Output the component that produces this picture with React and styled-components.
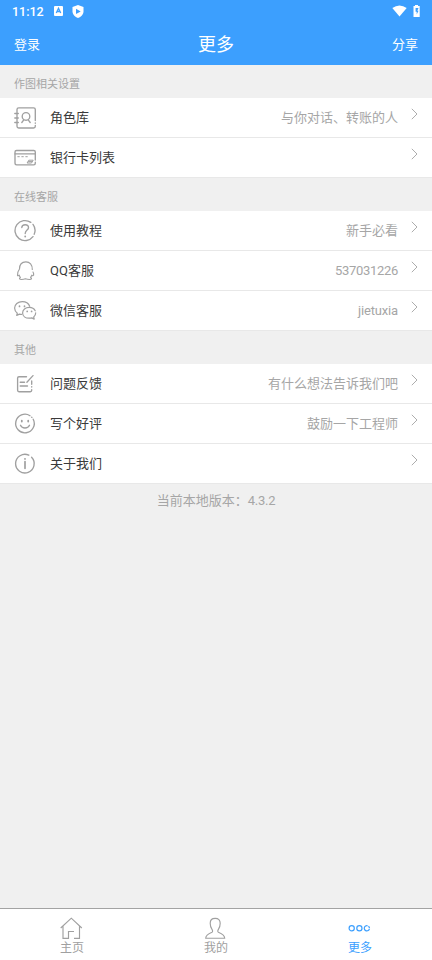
import React from "react";
import styled, { createGlobalStyle } from "styled-components";

const colors = {
	primary: "#3c9ffe",
	page: "#f0f0f0",
	line: "#e8e8e8",
	text: "#3a3a3a",
	muted: "#a6a6a6",
	icon: "#a0a0a0",
};

const GlobalStyle = createGlobalStyle`
	* {
		box-sizing: border-box;
	}

	body {
		margin: 0;
		font-family: Roboto, "Noto Sans CJK SC", sans-serif;
		background: ${colors.page};
	}
`;

const Screen = styled.div`
	height: 960px;
	width: 432px;
	display: flex;
	flex-direction: column;
	background: ${colors.page};
	overflow: hidden;
`;

const StatusBar = styled.div`
	height: 23px;
	flex: none;
	display: flex;
	align-items: center;
	padding: 0 12px;
	color: #fff;
	background: ${colors.primary};
	font-size: 12.5px;
	font-weight: 500;

	svg {
		display: block;
	}
`;

const StatusIcons = styled.div`
	display: flex;
	align-items: center;
	gap: ${(props) => props.$gap}px;
	margin-left: ${(props) => props.$left};
	padding-bottom: 1px;
`;

const NavBar = styled.header`
	height: 42px;
	flex: none;
	display: grid;
	grid-template-columns: 1fr auto 1fr;
	align-items: center;
	padding: 0 14px;
	color: #fff;
	background: ${colors.primary};
`;

const NavTitle = styled.h1`
	margin: 0;
	padding-top: 2px;
	font-size: 18px;
	line-height: 26px;
	font-weight: 400;
`;

const NavAction = styled.span`
	font-size: 13px;
	line-height: 20px;
	padding-top: 2px;
	text-align: ${(props) => props.$align};
`;

const Content = styled.main`
	flex: 1;
`;

const SectionTitle = styled.h2`
	height: 33px;
	margin: 0;
	padding: 5px 14px 0;
	font-size: 11px;
	line-height: 30px;
	font-weight: 400;
	color: ${colors.muted};
`;

const List = styled.div`
	background: #fff;
`;

const Row = styled.div`
	height: 40px;
	display: flex;
	align-items: center;
	padding: 0 14px 0 13px;
	border-bottom: 1px solid ${colors.line};
`;

const RowIcon = styled.svg`
	width: 24px;
	height: 24px;
	flex: none;
	margin-right: 13px;
	fill: none;
	stroke: ${colors.icon};
	stroke-width: 1.35;
	stroke-linecap: round;
	stroke-linejoin: round;
`;

const RowLabel = styled.span`
	flex: 1;
	font-size: 13px;
	line-height: 20px;
	color: ${colors.text};
`;

const RowValue = styled.span`
	font-size: 13px;
	line-height: 20px;
	letter-spacing: ${(props) => props.$tracking || 0}px;
	color: ${colors.muted};
`;

const Chevron = styled.svg`
	width: 7px;
	height: 12px;
	margin: 0 0 8px 13px;
	fill: none;
	stroke: #adadad;
	stroke-width: 1;
`;

const Version = styled.p`
	margin: 7px 0 0;
	font-size: 13px;
	line-height: 20px;
	text-align: center;
	color: ${colors.muted};

	span {
		letter-spacing: -0.3px;
	}
`;

const TabBar = styled.nav`
	height: 52px;
	flex: none;
	display: grid;
	grid-template-columns: repeat(3, 1fr);
	background: #fff;
	border-top: 1px solid #a3a3a3;
`;

const Tab = styled.div`
	display: flex;
	flex-direction: column;
	align-items: center;
	padding-top: 7px;
	font-size: 12px;
	line-height: 16px;
	color: ${(props) => (props.$active ? colors.primary : colors.icon)};

	svg {
		width: 24px;
		height: 24px;
		margin-right: 2px;
		fill: none;
		stroke: currentColor;
		stroke-width: 1.15;
	}
`;

const icons = {
	contacts: (
		<>
			<path d="M22.3 14.5V3.5Q22.3 1.8 20.6 1.8H5.7Q4 1.8 4 3.5V20.3Q4 22 5.7 22H20.6Q22.3 22 22.3 20.3V19.5M22.3 16.8V17.2" />
			<path d="M1.8 7.5H5.3M1.8 12H5.3M1.8 16.5H5.3" />
			<circle cx="13" cy="10.4" r="3.8" />
			<path d="M10.8 13.8L8.8 16.5M15.2 13.8L17.2 16.5" />
		</>
	),
	card: (
		<>
			<path d="M22.3 14V6Q22.3 4.5 20.8 4.5H3.5Q2 4.5 2 6V17.3Q2 18.8 3.5 18.8H20.8Q22.3 18.8 22.3 17.3V16.2" />
			<path d="M2 7.9H22.3" />
			<path d="M4.8 10.7H6.3M8.8 10.7H10.3M12.8 10.7H14.3" strokeWidth="1" />
			<path d="M16.2 14.2H20.2L18.5 17H14.5ZM15.5 15.6H19" strokeWidth="1" />
		</>
	),
	help: (
		<>
			<path d="M17.8 3.4A10 10 0 1 0 20 17.6M21.2 15.3A10 10 0 0 0 20 5.4" />
			<path d="M8.8 8.6Q8.9 5.7 12.2 5.7T15.5 8.7C15.5 11 12.2 11.3 12.2 14.5" />
			<path d="M12.2 17.3V17.5" strokeWidth="1.8" />
		</>
	),
	qq: (
		<path
			d="M19.3 10.5C19.4 5.6 16.8 2.8 12.9 2.8S6.5 5.6 6.5 10C4.8 12.3 4.1 14.6 4.5 16.6Q5.2 17.2 6.2 16.2C6.5 17.2 6.8 17.8 7.4 18.4C5.8 19.3 6.3 20.5 8.5 20.5C10.5 20.5 11.5 20.2 12.4 19.8C13.5 20.2 14.5 20.5 16.5 20.5C18.8 20.5 19.2 19.3 17.6 18.4Q18.5 17.2 18.8 16.2Q20 17.2 20.6 16.2Q20.9 14.5 20 13"
			strokeWidth="1.15"
		/>
	),
	wechat: (
		<>
			<path
				d="M16.7 7.3C15.6 4.4 12.8 2.6 9.3 2.6C4.8 2.6 1.6 5.5 1.6 9.1C1.6 11.3 2.7 13 4.3 14.2L3.7 16.4L6.5 15.1Q7.5 15.4 8.5 15.4"
				strokeWidth="1.2"
			/>
			<path
				d="M16.3 8.4C12.4 8.4 9.6 10.8 9.6 13.9S12.4 19.2 16.2 19.2Q17.6 19.2 18.8 18.9L21.2 20.1L20.7 18C22 17 22.7 15.5 22.7 13.8M22.2 11.8C21.2 9.7 19.2 8.4 16.3 8.4"
				strokeWidth="1.2"
			/>
			<path d="M6.5 7.2V7.4M11.5 7.2V7.4M14.2 12.3V12.5M18.6 12.3V12.5" strokeWidth="1.7" />
		</>
	),
	edit: (
		<>
			<path d="M13.5 4.7H6Q4.6 4.7 4.6 6V18.3Q4.6 19.7 6 19.7H17.3Q18.7 19.7 18.7 18.3V17.6M18.7 15V14.6M18.7 12.3V9" />
			<path d="M7.2 10.2H11.5M7.2 14H14.5M20 3.6L13.9 10.2" />
		</>
	),
	smile: (
		<>
			<path d="M17 3.7A9.3 9.3 0 1 0 20.2 7.2M18.9 5.4L18.7 5.2" />
			<path d="M8.8 8.7V9.5M15.2 8.7V9.5" strokeWidth="1.8" />
			<path d="M7.5 13.3C9 16.9 15 16.9 16.5 13.3" />
		</>
	),
	info: (
		<>
			<path d="M15.8 3.2A9.3 9.3 0 1 0 18.6 5.2" />
			<path d="M12 9.7V16.3" strokeWidth="1.7" />
			<path d="M12 6.8V6.9" strokeWidth="1.8" />
		</>
	),
};

const sections = [
	{
		title: "作图相关设置",
		rows: [
			{ icon: "contacts", label: "角色库", value: "与你对话、转账的人" },
			{ icon: "card", label: "银行卡列表" },
		],
	},
	{
		title: "在线客服",
		rows: [
			{ icon: "help", label: "使用教程", value: "新手必看" },
			{ icon: "qq", label: "QQ客服", value: "537031226", tracking: -0.3 },
			{ icon: "wechat", label: "微信客服", value: "jietuxia", tracking: -0.15 },
		],
	},
	{
		title: "其他",
		rows: [
			{ icon: "edit", label: "问题反馈", value: "有什么想法告诉我们吧" },
			{ icon: "smile", label: "写个好评", value: "鼓励一下工程师" },
			{ icon: "info", label: "关于我们" },
		],
	},
];

const tabs = [
	{
		label: "主页",
		icon: <path d="M1.7 12L12.3 2.2L22.8 12M4 10.3V22.3H9.5V15.5H15M15 22.3H20.5V10.3" />,
	},
	{
		label: "我的",
		icon: (
			<path d="M2.7 22.2H21.7C21.7 19.2 19.7 18 15.4 16.2C14.5 15.7 14.7 14.3 15.4 13.3C16.7 11.6 17.2 9.8 17.2 7.3C17.2 4 15.4 2.4 12.2 2.4S7.2 4 7.2 7.3C7.2 9.8 7.7 11.6 9 13.3C9.7 14.3 9.9 15.7 9 16.2C4.7 18 2.7 19.2 2.7 22.2Z" />
		),
	},
	{
		label: "更多",
		active: true,
		icon: (
			<g strokeWidth="1.2">
				<circle cx="4.7" cy="12.3" r="2.6" />
				<circle cx="12.4" cy="12.3" r="2.6" />
				<path d="M22.4 12.9A2.6 2.6 0 1 1 20.6 9.8M21.4 10.3A2.6 2.6 0 0 1 22.5 12.3" />
			</g>
		),
	},
];

const App = () => {
	return (
		<>
			<GlobalStyle />
			<Screen>
				<StatusBar>
					<span>11:12</span>
					<StatusIcons $gap={9} $left="10px">
						<svg width="9" height="10" viewBox="0 0 9 10">
							<rect width="9" height="10" rx="1" fill="#fff" />
							<path d="M2.3 7L4.5 2.3L6.7 7M3.2 5.5H5.8" fill="none" stroke={colors.primary} strokeWidth="1.3" />
						</svg>
						<svg width="12" height="13" viewBox="0 0 12 13">
							<path d="M6 0L11.5 2V6.2C11.5 9.5 9 12 6 13C3 12 .5 9.5 .5 6.2V2Z" fill="#fff" />
							<path d="M4 3.8L8.7 6.4L4 9Z" fill={colors.primary} />
						</svg>
					</StatusIcons>
					<StatusIcons $gap={6} $left="auto">
						<svg width="15" height="12" viewBox="0 0 15 12">
							<path d="M.3 3Q7.5-2.2 14.7 3L7.5 11.5Z" fill="#fff" />
						</svg>
						<svg width="7" height="12" viewBox="0 0 7 12">
							<path d="M2 0H5V1H6.7V12H.5V1H2Z" fill="#fff" />
							<path d="M5.5 3H2.6V6.7H3.7V9.5L5.5 5.8H4.3Z" fill={colors.primary} />
						</svg>
					</StatusIcons>
				</StatusBar>
				<NavBar>
					<NavAction $align="left">登录</NavAction>
					<NavTitle>更多</NavTitle>
					<NavAction $align="right">分享</NavAction>
				</NavBar>
				<Content>
					{sections.map((section) => (
						<section key={section.title}>
							<SectionTitle>{section.title}</SectionTitle>
							<List>
								{section.rows.map((row) => (
									<Row key={row.label}>
										<RowIcon viewBox="0 0 24 24">{icons[row.icon]}</RowIcon>
										<RowLabel>{row.label}</RowLabel>
										{row.value && <RowValue $tracking={row.tracking}>{row.value}</RowValue>}
										<Chevron viewBox="0 0 7 12">
											<path d="M.8 .8L6 6L.8 11.2" />
										</Chevron>
									</Row>
								))}
							</List>
						</section>
					))}
					<Version>
						当前本地版本：<span>4.3.2</span>
					</Version>
				</Content>
				<TabBar>
					{tabs.map((tab) => (
						<Tab key={tab.label} $active={tab.active}>
							<svg viewBox="0 0 24 24">{tab.icon}</svg>
							<span>{tab.label}</span>
						</Tab>
					))}
				</TabBar>
			</Screen>
		</>
	);
};

export default App;
